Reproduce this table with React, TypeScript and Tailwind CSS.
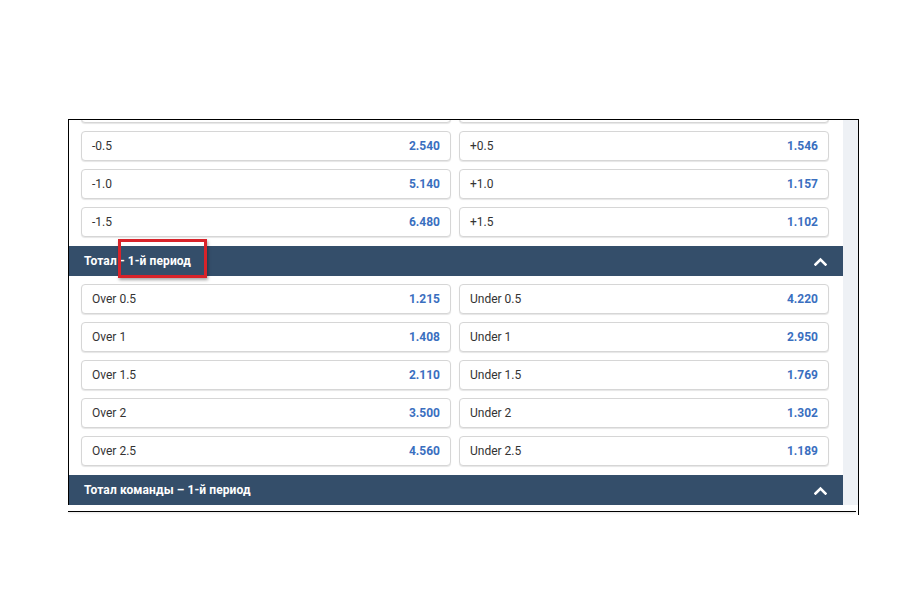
import React from 'react';

type Pair = [string, string, string, string];

const handicapRows: Pair[] = [
  ['-0.5', '2.540', '+0.5', '1.546'],
  ['-1.0', '5.140', '+1.0', '1.157'],
  ['-1.5', '6.480', '+1.5', '1.102'],
];

const totalRows: Pair[] = [
  ['Over 0.5', '1.215', 'Under 0.5', '4.220'],
  ['Over 1', '1.408', 'Under 1', '2.950'],
  ['Over 1.5', '2.110', 'Under 1.5', '1.769'],
  ['Over 2', '3.500', 'Under 2', '1.302'],
  ['Over 2.5', '4.560', 'Under 2.5', '1.189'],
];

const Cell = ({ label, odd }: { label: string; odd: string }) => (
  <div className="flex h-[30px] flex-1 items-center justify-between rounded-[4px] border border-[#d6d6d6] bg-white px-[10px] shadow-[0_1px_1px_rgba(0,0,0,0.10)]">
    <span className="text-[12px] text-[#333333]">{label}</span>
    <span className="text-[12px] font-bold text-[#3a6fbf]">{odd}</span>
  </div>
);

const Rows = ({ rows }: { rows: Pair[] }) => (
  <div className="flex flex-col gap-2 pl-3 pr-[14px] pt-2 pb-[9px]">
    {rows.map((r) => (
      <div key={r[0]} className="flex gap-2">
        <Cell label={r[0]} odd={r[1]} />
        <Cell label={r[2]} odd={r[3]} />
      </div>
    ))}
  </div>
);

const ChevronUp = () => (
  <svg width="13" height="9" viewBox="0 0 13 9" fill="none" aria-hidden="true">
    <path d="M1.5 7.5 L6.5 2.5 L11.5 7.5" stroke="white" strokeWidth="2.6" strokeLinecap="square" />
  </svg>
);

const Header = ({ title, marked }: { title: string; marked?: boolean }) => (
  <div className="relative flex h-[30px] items-center justify-between bg-[#344e6a] pl-[15px] pr-[16px]">
    <span className="text-[12px] font-bold tracking-[0.1px] text-white">{title}</span>
    <ChevronUp />
    {marked && (
      <div className="absolute left-[49px] top-[-7px] h-[39px] w-[89px] border-[3px] border-[#d8232a] shadow-[1px_2px_3px_rgba(0,0,0,0.35)]" />
    )}
  </div>
);

export default function App() {
  return (
    <div className="min-h-[615px] bg-white pt-[119px] font-['Roboto','Liberation_Sans',sans-serif]">
      <div className="ml-[68px] w-[791px]">
        <div className="flex border-x border-t border-black">
          <div className="flex w-[774px] flex-col bg-white">
            {/* tail of the row above the visible area */}
            <div className="flex h-[11px] gap-2 overflow-hidden pl-3 pr-[14px]">
              <div className="-mt-[27px] h-[30px] flex-1 shrink-0 rounded-[4px] border border-[#d6d6d6] bg-white shadow-[0_1px_1px_rgba(0,0,0,0.10)]" />
              <div className="-mt-[27px] h-[30px] flex-1 shrink-0 rounded-[4px] border border-[#d6d6d6] bg-white shadow-[0_1px_1px_rgba(0,0,0,0.10)]" />
            </div>
            <div className="-mt-2">
              <Rows rows={handicapRows} />
            </div>
            <Header title="Тотал - 1-й период" marked />
            <Rows rows={totalRows} />
            <Header title="Тотал команды – 1-й период" />
          </div>
          <div className="flex-1 bg-[#eef1f5]" />
        </div>
        <div className="h-[6px] border-r border-black" />
        <div className="flex">
          <div className="h-px w-[788px] bg-black shadow-[0_1px_2px_rgba(0,0,0,0.15)]" />
          <div className="ml-auto h-[4px] w-px bg-black" />
        </div>
      </div>
    </div>
  );
}
